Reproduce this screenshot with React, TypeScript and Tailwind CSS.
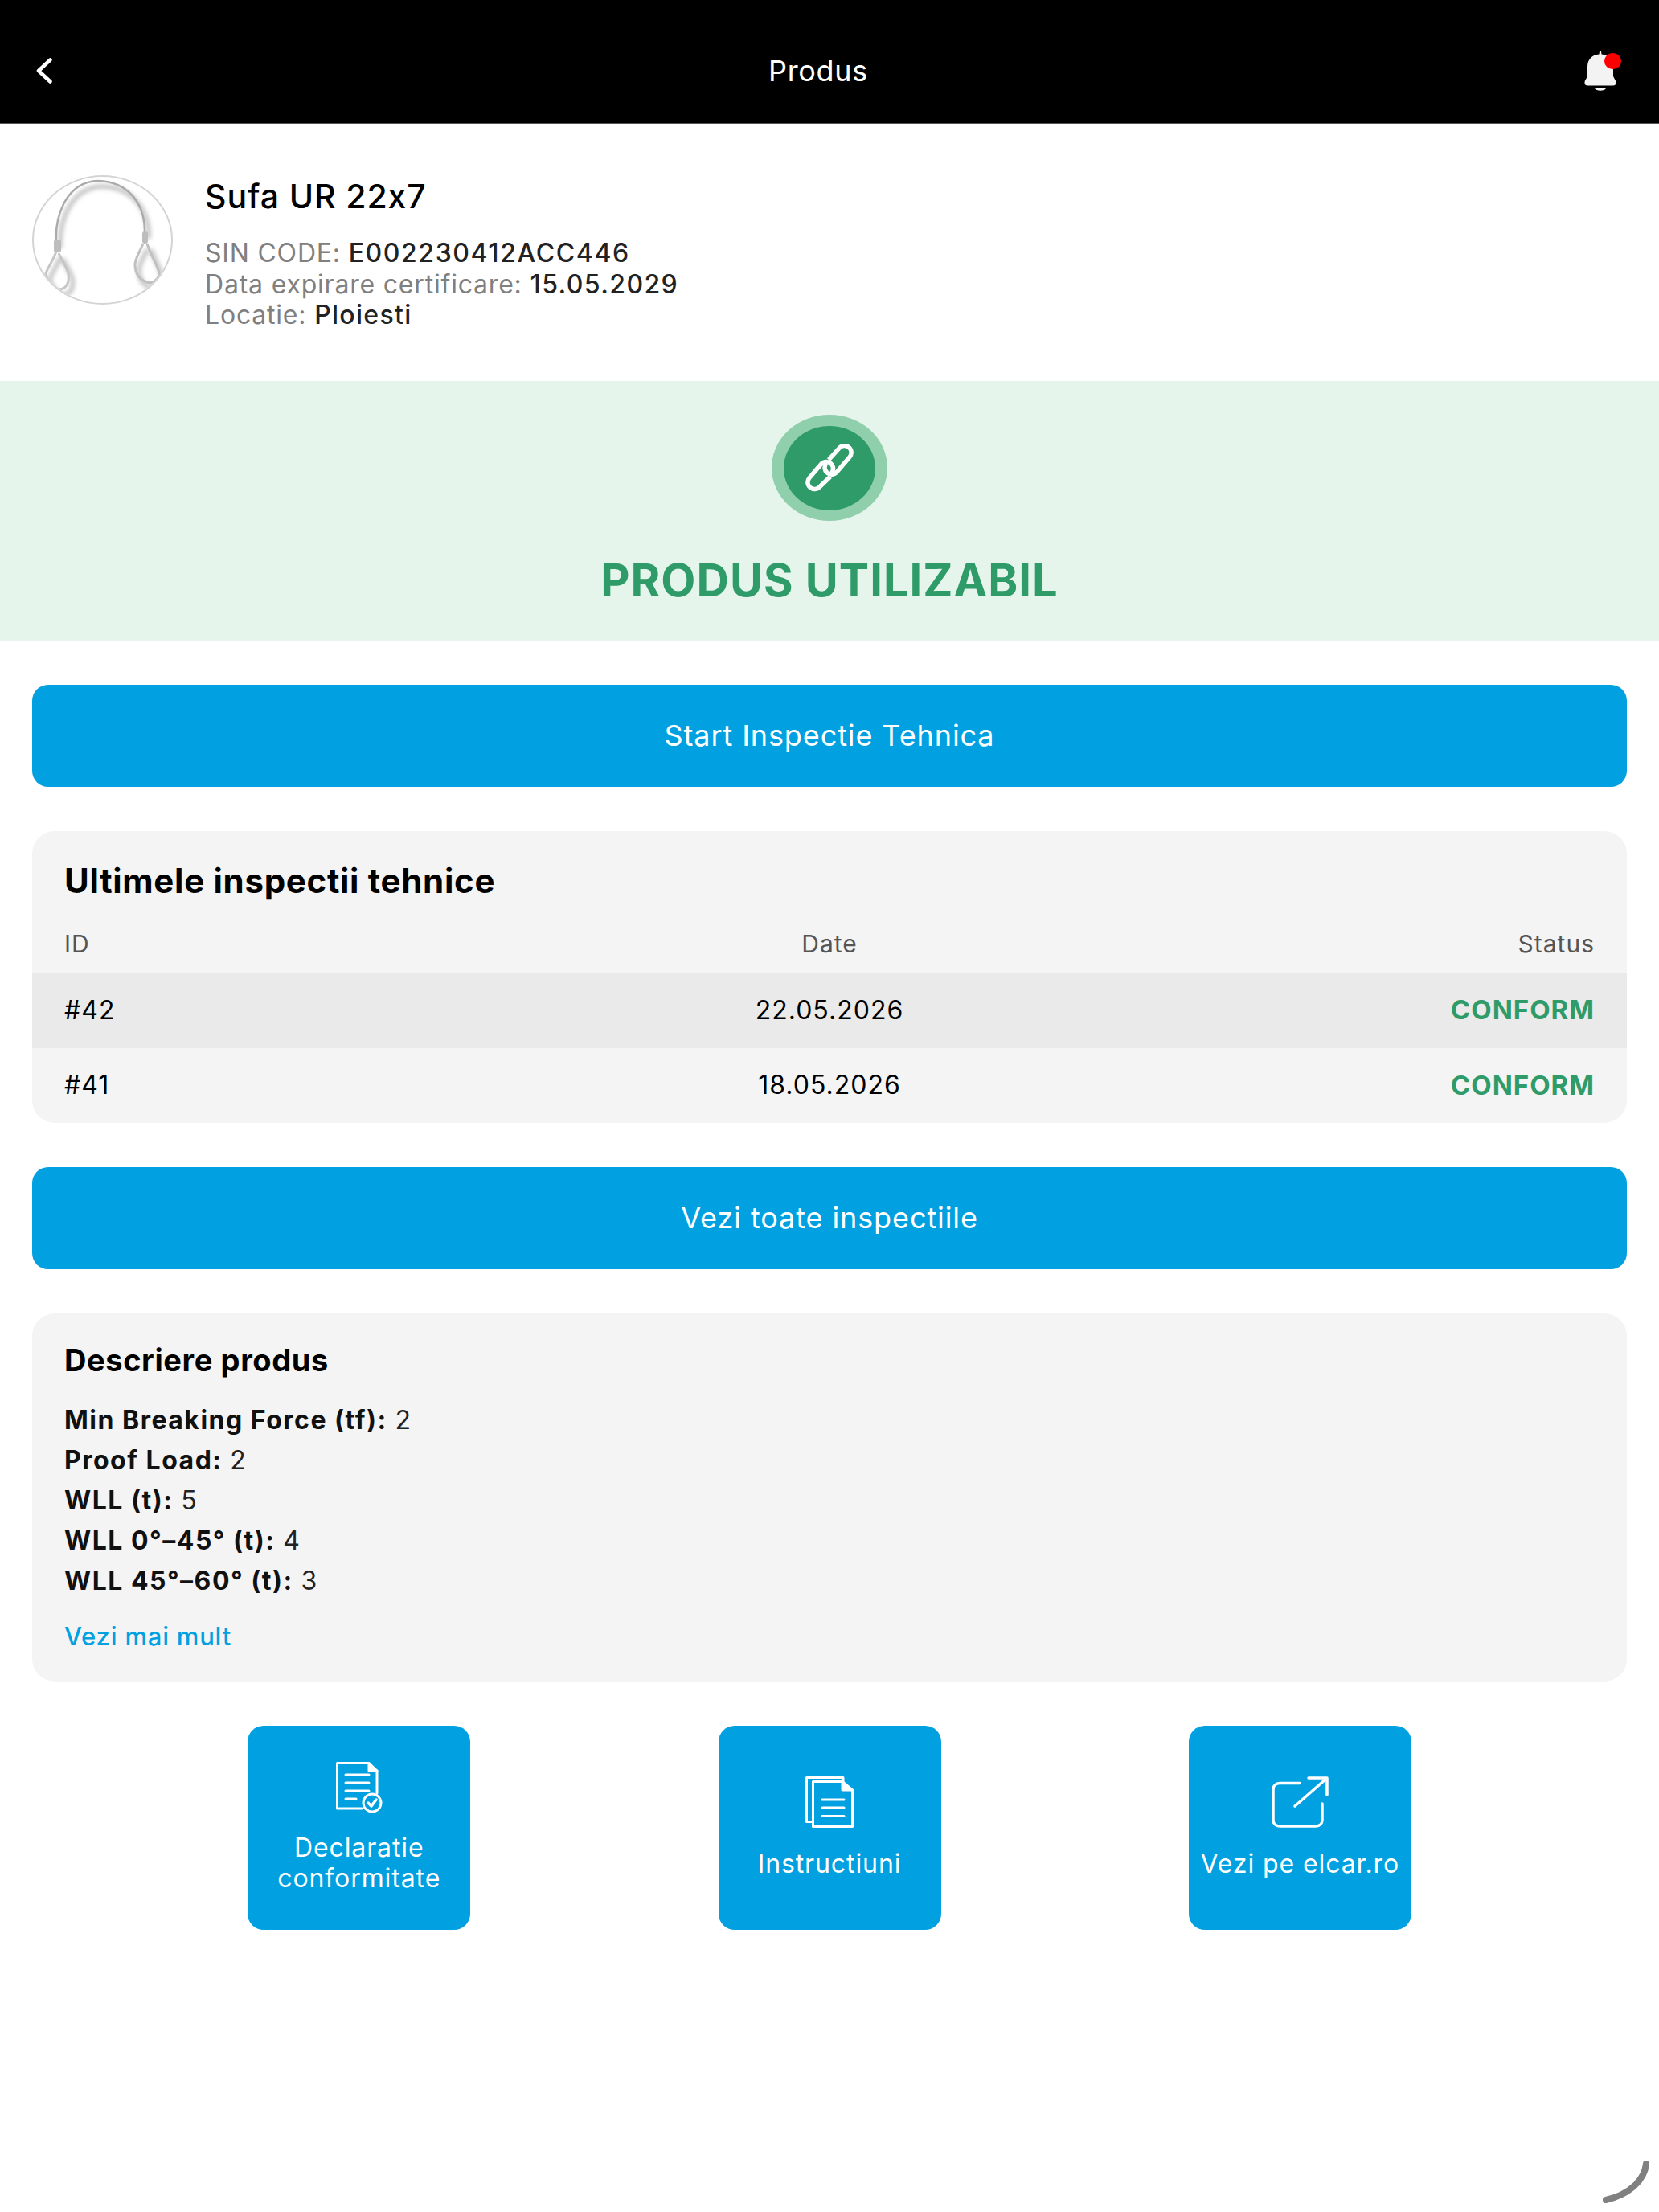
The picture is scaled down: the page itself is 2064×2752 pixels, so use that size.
import { ReactNode } from 'react'

const font = 'font-["Inter","Liberation_Sans",sans-serif]'

function BackIcon() {
  return (
    <svg width="20" height="32" viewBox="0 0 20 32" fill="none" stroke="#fff" strokeWidth="4.5" strokeLinecap="round" strokeLinejoin="round">
      <path d="M17.5 2.5 L3 16 L17.5 29.5" />
    </svg>
  )
}

function BellIcon() {
  return (
    <div className="relative w-[40px] h-[50px]">
      <svg width="40" height="50" viewBox="0 0 40 50" fill="#f3f3f3">
        <path d="M18.500 4.500 L19 1 C19.300 0 20.700 0 21 1 L21.500 4.500 C30 5 36 11 36 20 L36 31 C36 34 39.500 36 39.500 40 C39.500 42.500 38 43.500 35.500 43.500 L4.500 43.500 C2 43.500 0.500 42.500 0.500 40 C0.500 36 4 34 4 31 L4 20 C4 11 10 5 18.500 4.500 Z" />
        <path d="M13 47 L27 47 C25 50.500 15 50.500 13 47 Z" />
      </svg>
      <span className="absolute left-[24.500px] top-[3.500px] w-[21px] h-[20px] rounded-full bg-[#ff0000]" />
    </div>
  )
}

function SlingImage() {
  const wire = 'M30 84 C28 48 44 8 82 7 C120 8 141 36 140 72'
  const leftLoop = 'M30 95 C26 106 20 114 17 122 C18 130 26 140 33 142 C42 142 47 134 45 122 C42 112 36 104 33 97'
  const rightLoop = 'M138 85 C134 96 127 104 128 113 C129 124 135 132 147 134 C154 132 159 126 158 121 C154 108 146 96 143 85'
  return (
    <svg width="175" height="161" viewBox="0 0 175 161" fill="none" className="shrink-0">
      <defs>
        <filter id="sling-shadow" x="-20%" y="-20%" width="140%" height="140%">
          <feGaussianBlur stdDeviation="2.500" />
        </filter>
        <clipPath id="sling-clip">
          <ellipse cx="87.500" cy="80.500" rx="85.500" ry="78.500" />
        </clipPath>
      </defs>
      <ellipse cx="87.500" cy="80.500" rx="86.500" ry="79.500" fill="#fff" stroke="#d4d4d4" strokeWidth="2" />
      <g clipPath="url(#sling-clip)">
        <g filter="url(#sling-shadow)" stroke="#c8c8c8" strokeWidth="6" transform="translate(5 7)">
          <path d={wire} />
          <path d={leftLoop} />
          <path d={rightLoop} />
        </g>
        <path d={wire} stroke="#ababab" strokeWidth="2.500" />
        <path d={leftLoop} stroke="#c6c6c6" strokeWidth="3" />
        <path d={rightLoop} stroke="#c0c0c0" strokeWidth="3" />
        <rect x="27" y="80" width="9" height="16" rx="3" fill="#bdbdbd" />
        <rect x="137" y="70" width="7" height="15" rx="3" fill="#bdbdbd" />
      </g>
    </svg>
  )
}

function ChainIcon() {
  return (
    <svg width="64" height="59" viewBox="0 0 64 59" fill="none" stroke="#fff" strokeWidth="5.500" strokeLinecap="butt">
      <path d="M31 19 L44.100 4.500 A8.500 8.500 0 0 1 57.100 15.500 L41.100 34.200 A8.500 8.500 0 0 1 28.100 23.200" />
      <path d="M33 40 L20 52.500 A8.500 8.500 0 0 1 7 41.500 L21.500 24.500 A8.500 8.500 0 0 1 34.500 35.500" />
    </svg>
  )
}

function DocCheckIcon() {
  return (
    <svg width="58" height="63" viewBox="0 0 58 63" fill="none" stroke="#fff" strokeWidth="3" strokeLinecap="round" strokeLinejoin="round">
      <path d="M51 39 L51 11 L41 1.500 L1.500 1.500 L1.500 58 L32 58" />
      <path d="M41 1.500 L41 11 L51 11" fill="#fff" />
      <path d="M12 16 H41 M12 26 H41 M12 36 H41 M12 46 H25" />
      <circle cx="45" cy="51" r="11" />
      <path d="M40 51 L44 55 L50 47" strokeWidth="3.500" />
    </svg>
  )
}

function DocsIcon() {
  return (
    <svg width="60" height="64" viewBox="0 0 60 64" fill="none" stroke="#fff" strokeWidth="3" strokeLinecap="round" strokeLinejoin="round">
      <path d="M9 56.500 L1.500 56.500 L1.500 1.500 L47 1.500 L47 6.500" />
      <path d="M9.500 6.500 L46 6.500 L58.500 17 L58.500 62.500 L9.500 62.500 Z" />
      <path d="M46 6.500 L46 17 L58.500 17" fill="#fff" />
      <path d="M21 29 H48 M21 39 H48 M21 49.500 H48" />
    </svg>
  )
}

function ExternalIcon() {
  return (
    <svg width="71" height="64" viewBox="0 0 71 64" fill="none" stroke="#fff" strokeWidth="3.500" strokeLinecap="round" strokeLinejoin="round">
      <path d="M35 8.500 L10 8.500 C5 8.500 2 11.500 2 16.500 L2 54 C2 59 5 62 10 62 L55 62 C60 62 63 59 63 54 L63 34" />
      <path d="M29 37 L68 3 M46 2 L69 2 L69 23" />
    </svg>
  )
}

function BlueButton({ children }: { children: ReactNode }) {
  return (
    <button className="w-full h-[127px] pb-[2px] rounded-[20px] bg-[#00a0e1] text-white text-[36px] tracking-[0.9px]">
      {children}
    </button>
  )
}

function Tile({ icon, label, gap }: { icon: ReactNode; label: ReactNode; gap: string }) {
  return (
    <div className="w-[277px] h-[254px] rounded-[20px] bg-[#00a0e1] flex flex-col items-center justify-center text-white text-[32px] leading-[38px] text-center tracking-[0.900px]">
      <div className={`flex items-center justify-center ${gap}`}>{icon}</div>
      {label}
    </div>
  )
}

const specs = [
  ['Min Breaking Force (tf):', '2'],
  ['Proof Load:', '2'],
  ['WLL (t):', '5'],
  ['WLL 0°–45° (t):', '4'],
  ['WLL 45°–60° (t):', '3'],
]

const inspections = [
  { id: '#42', date: '22.05.2026', bg: 'bg-[#eaeaea]' },
  { id: '#41', date: '18.05.2026', bg: '' },
]

export default function App() {
  return (
    <div className={`${font} relative bg-white h-[2752px] w-[2064px] overflow-hidden text-black`}>
      <header className="h-[154px] pt-[22px] bg-black border-b border-[#555] flex items-center text-white">
        <div className="w-[65px] pl-[45px] shrink-0 flex"><BackIcon /></div>
        <div className="flex-1 text-center text-[36px] tracking-[0.700px]">Produs</div>
        <div className="w-[93px] shrink-0"><BellIcon /></div>
      </header>

      <section className="h-[320px] pt-[64px] px-[40px] flex gap-[40px] items-start">
        <SlingImage />
        <div className="pt-[2px]">
          <h1 className="text-[41px] leading-[48px] font-medium tracking-[0.900px]">Sufa UR 22x7</h1>
          <div className="mt-[28px] text-[32px] leading-[38.500px] tracking-[0.800px] text-[#808080]">
            <p>SIN CODE: <span className="text-[#222] font-medium tracking-[1.600px]">E002230412ACC446</span></p>
            <p>Data expirare certificare: <span className="text-[#222] font-medium tracking-[1.400px]">15.05.2029</span></p>
            <p>Locatie: <span className="text-[#222] font-medium tracking-[1.300px]">Ploiesti</span></p>
          </div>
        </div>
      </section>

      <section className="h-[323px] bg-[#e6f5eb] flex flex-col items-center pt-[42px]">
        <div className="w-[144px] h-[132px] rounded-[50%] bg-[#90cfab] flex items-center justify-center">
          <div className="w-[114px] h-[105px] rounded-[50%] bg-[#2e9b69] flex items-center justify-center">
            <ChainIcon />
          </div>
        </div>
        <div className="mt-[41px] text-[56px] leading-[66px] font-bold text-[#2e9b69] tracking-[1px]">PRODUS UTILIZABIL</div>
      </section>

      <main className="px-[40px] pt-[55px] flex flex-col gap-[55px]">
        <BlueButton>Start Inspectie Tehnica</BlueButton>

        <section className="h-[363px] rounded-[28px] bg-[#f4f4f4] overflow-hidden">
          <h2 className="px-[40px] pt-[38px] text-[42px] leading-[48px] font-bold tracking-[0.700px]">Ultimele inspectii tehnice</h2>
          <div className="mt-[32px] h-[58px] px-[40px] grid grid-cols-3 text-[30px] tracking-[1px] text-[#555]">
            <span>ID</span>
            <span className="text-center">Date</span>
            <span className="text-right">Status</span>
          </div>
          {inspections.map(row => (
            <div key={row.id} className={`h-[93.500px] px-[40px] grid grid-cols-3 items-center text-[32px] tracking-[1px] ${row.bg}`}>
              <span>{row.id}</span>
              <span className="text-center">{row.date}</span>
              <span className="text-right font-bold text-[33px] tracking-[1px] text-[#2e9b69]">CONFORM</span>
            </div>
          ))}
        </section>

        <BlueButton>Vezi toate inspectiile</BlueButton>

        <section className="h-[458px] rounded-[28px] bg-[#f4f4f4] px-[40px] pt-[36px]">
          <h2 className="text-[38px] leading-[44px] font-bold tracking-[0.600px]">Descriere produs</h2>
          <div className="mt-[28px] text-[32px] leading-[50px] tracking-[0.800px] text-[#222]">
            {specs.map(([label, value]) => (
              <p key={label}><span className="font-bold tracking-[1.500px] text-[#111]">{label}</span> {value}</p>
            ))}
          </div>
          <a className="block mt-[24px] text-[31px] leading-[40px] font-medium tracking-[0.800px] text-[#00a0e1]">Vezi mai mult</a>
        </section>

        <section className="flex justify-evenly -mx-[40px]">
          <Tile icon={<DocCheckIcon />} label={<span>Declaratie<br />conformitate</span>} gap="mb-[25px]" />
          <Tile icon={<DocsIcon />} label="Instructiuni" gap="mb-[26px]" />
          <Tile icon={<ExternalIcon />} label="Vezi pe elcar.ro" gap="mb-[26px]" />
        </section>
      </main>

      <svg width="60" height="56" viewBox="0 0 60 56" fill="none" className="absolute left-[1994px] top-[2688px]">
        <path d="M54 4 C52 24 34 42 4 49" stroke="#808080" strokeWidth="8" strokeLinecap="round" />
      </svg>
    </div>
  )
}
